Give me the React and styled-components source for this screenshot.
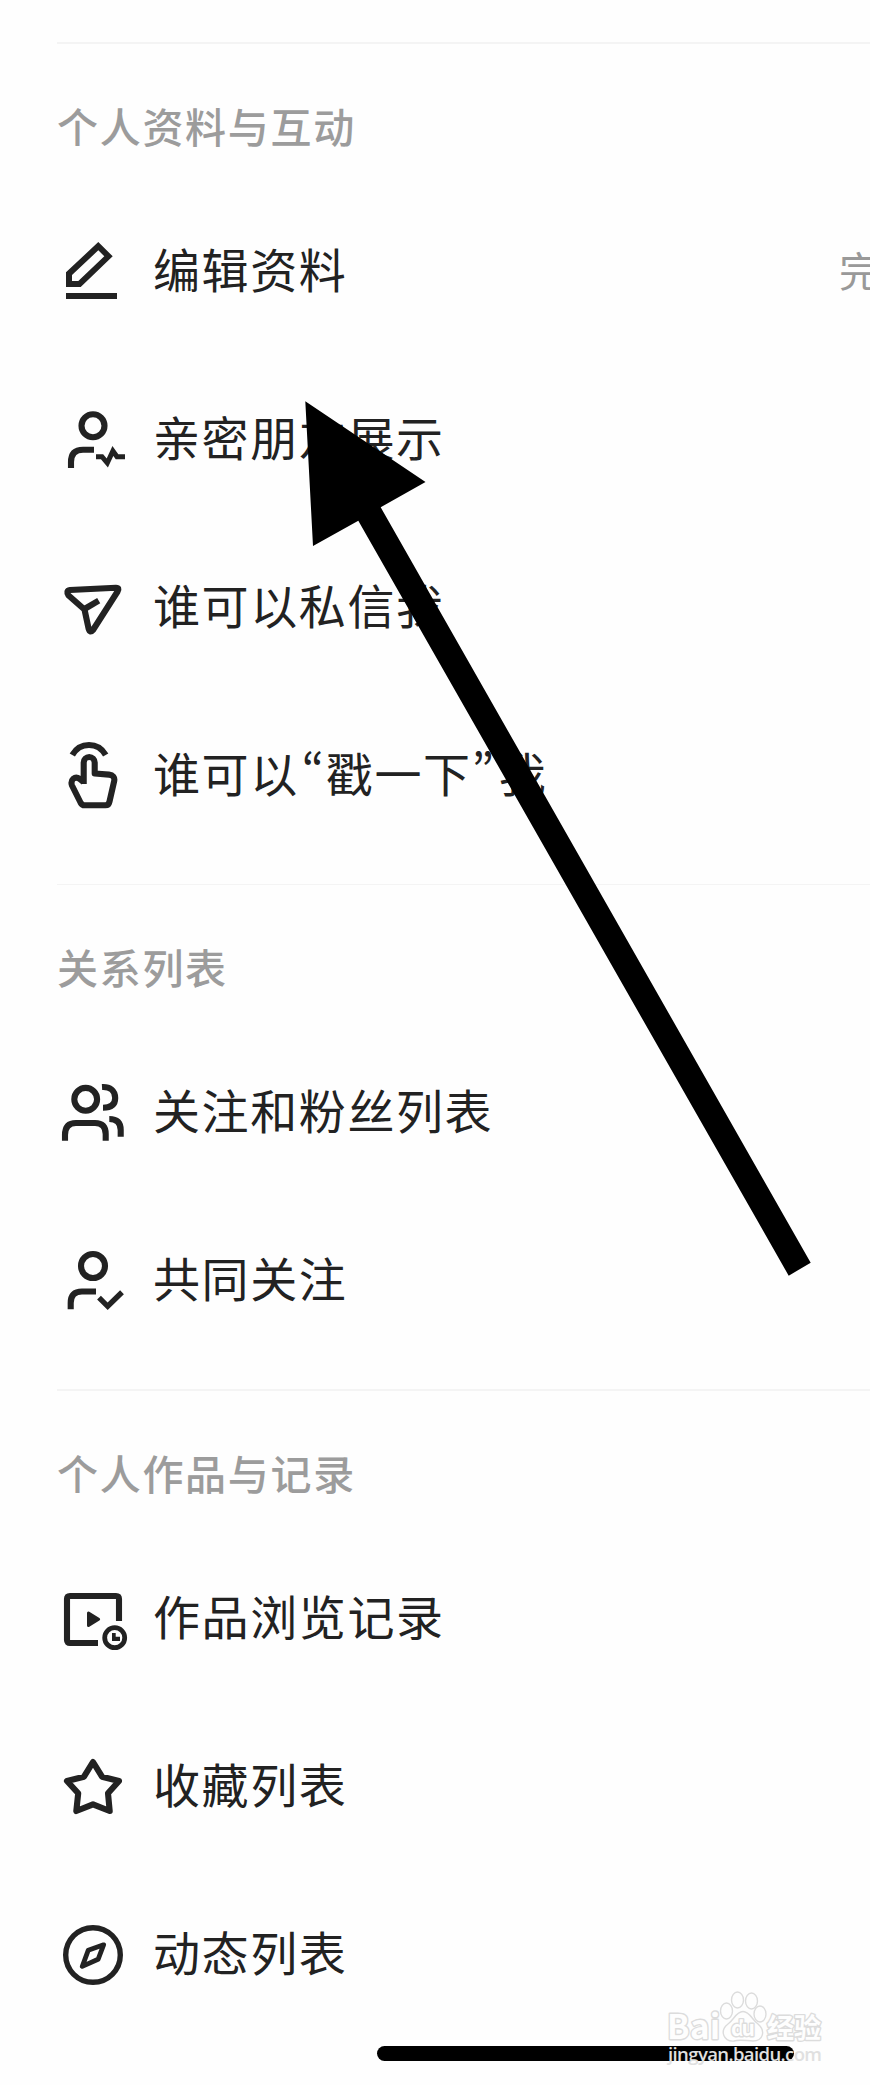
import React from 'react';
import styled, { createGlobalStyle } from 'styled-components';

const GlobalStyle = createGlobalStyle`
  * {
    box-sizing: border-box;
  }

  body {
    margin: 0;
    background: #fefefe;
    font-family: 'Noto Sans CJK SC', 'Noto Sans', sans-serif;
  }
`;

const Page = styled.main`
  position: relative;
  width: 870px;
  height: 2085px;
  padding: 42px 0 0 57px;
  overflow: hidden;
  background: #fefefe;
`;

const Section = styled.section`
  padding-bottom: 24px;
  border-top: ${props => props.$line || 2}px solid #f4f4f4;

  &:last-of-type {
    padding-bottom: 0;
  }
`;

const SectionTitle = styled.h2`
  height: 144px;
  margin: 0;
  padding-top: 51px;
  font-size: 41px;
  line-height: 60px;
  font-weight: 500;
  letter-spacing: 1.7px;
  color: #9c9c9c;
`;

const Row = styled.div`
  display: flex;
  align-items: center;
  height: 168px;
  padding-left: 3px;
`;

const IconSlot = styled.svg`
  flex: none;
  width: 68px;
  height: 64px;
  overflow: visible;
  fill: none;
  stroke: #222;
  stroke-width: 6.1;
`;

const Label = styled.span`
  margin-left: 25px;
  padding-bottom: 8px;
  font-size: 47px;
  line-height: 68px;
  letter-spacing: 1.6px;
  white-space: nowrap;
  color: #222;
`;

const Quote = styled.span`
  display: inline-block;
  width: 27px;
  text-indent: ${props => (props.$open ? 3 : 0)}px;
  font-feature-settings: 'pwid';
`;

const Value = styled.span`
  width: 31px;
  margin-left: auto;
  padding-bottom: 6px;
  overflow: hidden;
  font-size: 41px;
  line-height: 60px;
  white-space: nowrap;
  color: #999;
`;

const HomeIndicator = styled.div`
  width: 417px;
  height: 15px;
  margin: 7px 0 0 320px;
  border-radius: 8px;
  background: #000;
`;

const Arrow = styled.svg`
  position: absolute;
  top: 400px;
  left: 300px;
  width: 520px;
  height: 880px;
`;

const Watermark = styled.svg`
  position: absolute;
  top: 1985px;
  left: 660px;
  width: 170px;
  height: 90px;
  font-family: 'Noto Sans CJK SC', sans-serif;
  fill: #fefefe;
  stroke: #dcdcdc;
  stroke-width: 1.4;
`;

const WatermarkText = styled.text`
  font-weight: 700;
  stroke-width: 2.8;
  stroke-linejoin: round;
  paint-order: stroke;
`;

const EditIcon = () => (
  <IconSlot viewBox="0 0 68 64">
    <path
      fill="#222"
      stroke="none"
      fillRule="evenodd"
      d="M6 32.3 38.3 2 52.7 16.3 20.7 47H6ZM12 35V41H18.3L44.3 16.3 38.3 10.3Z"
    />
    <path d="M6 56H57" />
  </IconSlot>
);

const FriendIcon = () => (
  <IconSlot viewBox="0 0 68 64">
    <circle cx="33" cy="17.7" r="11.5" />
    <path d="M11 60V54Q11 41.7 23 41.7H34" />
    <path strokeWidth="5" strokeMiterlimit="8" d="M36 48.7H42L47.3 55 52.9 43 57 48.7H65" />
  </IconSlot>
);

const SendIcon = () => (
  <IconSlot viewBox="0 0 68 64" strokeLinejoin="round">
    <path d="M10 14 56 11.8Q59.8 11.8 57.6 15.5L33 54Q30 57.5 28.7 53L24.5 33.5 8.6 19.5Q5.5 14.6 10 14Z" />
    <path d="M24.5 33 38.7 24.7" />
  </IconSlot>
);

const PokeIcon = () => (
  <IconSlot viewBox="0 0 68 64" strokeLinejoin="round">
    <path d="M12.3 11C20-2.3 38-2.3 45.7 11" />
    <path d="M23.7 40V18.5a5.5 5.5 0 0 1 11 0V29.5L49 30.6C53 31 54.9 33.5 54.2 37L49.5 57.5Q48.7 61.3 45.5 61.3H24.5Q22 61.3 20.5 58.5L12 41.5C10 36 15 31.5 19.5 34.8L23.7 38" />
  </IconSlot>
);

const FansIcon = () => (
  <IconSlot viewBox="0 0 68 64">
    <circle cx="25.7" cy="18.3" r="11.4" />
    <path d="M5 59.7V54Q5 42 16 42H35Q45.7 42 45.7 53V59.7" />
    <path d="M42 6C50 5.5 55.2 9.5 55.2 17S50 26.7 43 26.7" />
    <path d="M49.3 38Q60.7 38 60.7 49V55.7" />
  </IconSlot>
);

const MutualIcon = () => (
  <IconSlot viewBox="0 0 68 64">
    <circle cx="33" cy="17" r="12" />
    <path d="M10.7 60.3V54Q10.7 42.5 22 42.5H36" />
    <path strokeWidth="5.4" d="M39 48.7 47.7 57.3 62 43.3" />
  </IconSlot>
);

const WorksIcon = () => (
  <IconSlot viewBox="0 0 68 64">
    <path d="M38 56H10Q7 56 7 53V12Q7 9 10 9H56Q59 9 59 12V34" />
    <path fill="#222" strokeWidth="3" strokeLinejoin="round" d="M28.5 26V38.5L38.6 32.2Z" />
    <circle cx="54.7" cy="50.7" r="10" strokeWidth="4.8" />
    <path fill="#222" stroke="none" d="M52 46H55.7V49.8H60V54H52Z" />
  </IconSlot>
);

const StarIcon = () => (
  <IconSlot viewBox="0 0 68 64" strokeLinejoin="round">
    <path d="M33 7 42 21.7 59 26 48 38.3 49.7 56 33 49.3 16.3 56 18.2 38.3 7 26 24 21.7Z" />
  </IconSlot>
);

const CompassIcon = () => (
  <IconSlot viewBox="0 0 68 64">
    <circle cx="33" cy="32" r="27.3" strokeWidth="5.4" />
    <path strokeWidth="4.8" strokeLinejoin="round" d="M43.6 21.8 28.2 27.3 22.3 43.4 38.1 36.3Z" />
  </IconSlot>
);

const sections = [
  {
    title: '个人资料与互动',
    items: [
      { icon: EditIcon, label: '编辑资料', value: '完' },
      { icon: FriendIcon, label: '亲密朋友展示' },
      { icon: SendIcon, label: '谁可以私信我' },
      { icon: PokeIcon, label: <>谁可以<Quote $open>“</Quote>戳一下<Quote>”</Quote>我</> },
    ],
  },
  {
    title: '关系列表',
    line: 1,
    items: [
      { icon: FansIcon, label: '关注和粉丝列表' },
      { icon: MutualIcon, label: '共同关注' },
    ],
  },
  {
    title: '个人作品与记录',
    items: [
      { icon: WorksIcon, label: '作品浏览记录' },
      { icon: StarIcon, label: '收藏列表' },
      { icon: CompassIcon, label: '动态列表' },
    ],
  },
];

const App = () => (
  <>
    <GlobalStyle />
    <Page>
      {sections.map(({ title, line, items }) => (
        <Section key={title} $line={line}>
          <SectionTitle>{title}</SectionTitle>
          {items.map(({ icon: Icon, label, value }, index) => (
            <Row key={index}>
              <Icon />
              <Label>{label}</Label>
              {value && <Value>{value}</Value>}
            </Row>
          ))}
        </Section>
      ))}
      <HomeIndicator />

      <Arrow viewBox="300 400 520 880">
        <path d="M305.3 401.3 425.5 482 380.7 507.3 810.7 1262.7 788.7 1275.7 358.3 520.7 313 546Z" />
      </Arrow>

      <Watermark viewBox="660 1985 170 90">
        <WatermarkText x="667" y="2039" fontSize="33" textLength="53">Bai</WatermarkText>
        <ellipse cx="726.5" cy="2011" rx="6" ry="8" />
        <ellipse cx="737.5" cy="2000" rx="6" ry="8" />
        <ellipse cx="751.5" cy="2001" rx="6" ry="8" />
        <ellipse cx="760" cy="2014" rx="6" ry="8" />
        <path d="M743 2011.5C750 2011.5 752 2020 758 2024C766 2031 763 2041 753 2041C747 2041 740 2039 734 2041C724 2042 719 2031 728 2024C734 2020 736 2011.5 743 2011.5Z" />
        <WatermarkText x="731" y="2036" fontSize="21" textLength="24">du</WatermarkText>
        <WatermarkText x="767" y="2038" fontSize="27" textLength="54">经验</WatermarkText>
        <text
          x="668"
          y="2061"
          fontFamily="Open Sans, sans-serif"
          fontSize="18.5"
          fontWeight="600"
          textLength="154"
          fill="#e0e0e0"
          stroke="none"
        >
          jingyan.baidu.com
        </text>
      </Watermark>
    </Page>
  </>
);

export default App;
